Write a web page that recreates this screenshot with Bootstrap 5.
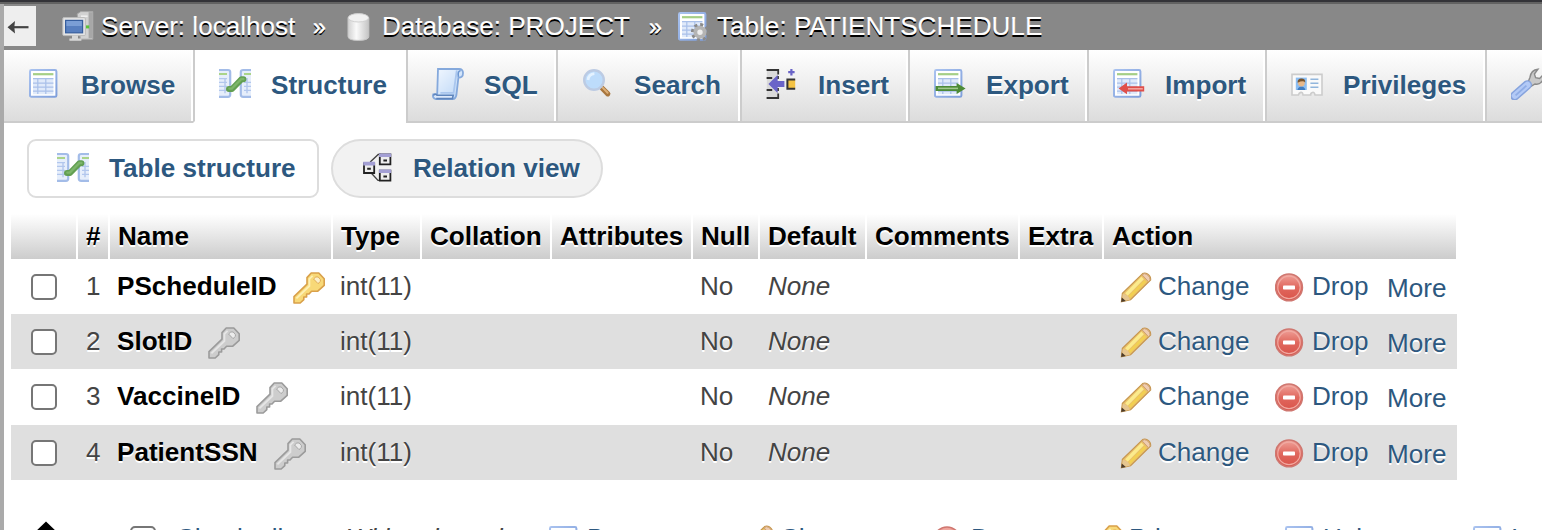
<!DOCTYPE html>
<html lang="en">
<head>
<meta charset="utf-8">
<title>PATIENTSCHEDULE structure</title>
<link href="https://cdn.jsdelivr.net/npm/bootstrap@5.3.0/dist/css/bootstrap.min.css" rel="stylesheet">
<style>
body{font:26.1px/30px "Liberation Sans",Arial,sans-serif;color:#444;background:#fff;height:530px;overflow:hidden;text-shadow:0 2px 0 #fff}
a{color:#2d587f;text-decoration:none}
.ico{width:32px;height:32px;flex:none;display:block}
.gold{--kf:#f8d978;--ks:#d9a04a;--kh:#fdf0b4}
.silver{--kf:#cdcdcd;--ks:#9b9b9b;--kh:#e6e6e6}
.shell{border-left:4px solid #aaa;height:526px;overflow:hidden}
.topline{height:4px;background:#333338;border-bottom:2px solid #626262}
.crumbs{height:46px;background:#888;text-shadow:0 2px 0 #000;white-space:nowrap}
.crumbs a{color:#fff}
.crumbs a.lbl{padding-bottom:2px;-webkit-text-stroke:.2px #fff}
.goback{width:32px;height:40px;background:#eee;margin-bottom:2px}
.sep{color:#fff;font-size:23px;width:13px;-webkit-text-stroke:.5px #fff}
.tabs{height:73px;width:1700px}
.tabs a{height:73px;padding:0 18px 3px 24px;border-left:2px solid #ccc;border-bottom:2px solid #ccc;background:linear-gradient(#fff,#dcdcdc);box-shadow:inset -2px 0 0 #fff;font-weight:bold;gap:20px;flex:none;white-space:nowrap}
.tabs span{padding-top:2px}
.tabs a.on{background:#fff;border-color:#ccc;border-bottom-color:#fff;box-shadow:none}
.sub{height:59px;border:2px solid #ddd;font-weight:bold;gap:20px;padding:0 0 1px 28px;white-space:nowrap}
.cols{table-layout:fixed;width:1446px;margin:16px 0 0 7px;border-collapse:separate;border-spacing:0}
.cols th{height:45px;padding:0 0 2px 8px;color:#000;background:linear-gradient(#fff,#ccc);border-right:2px solid #fff;white-space:nowrap;vertical-align:middle}
.cols th:last-child{border-right-width:1px}
.cols td{height:55px;padding:0 0 2px 8px;white-space:nowrap;vertical-align:middle}
.cols td.near{padding-left:7px}
.cols tr.tall td{height:56px}
.cols tr.even td{background:#dfdfdf}
.cols b{color:#000}
.cb{width:26px;height:26px;border:2px solid #767676;border-radius:5px;background:#fff;flex:none;display:block;margin:2px 0 0 12px}
.foot{margin:45px 0 0;height:32px;width:1800px}
.foot .lift{margin-top:-2px}
</style>
</head>
<body>
<svg width="0" height="0" class="position-absolute" aria-hidden="true">
<defs>
<linearGradient id="gr" x1="0" y1="0" x2="0" y2="1"><stop offset="0" stop-color="#f0a39b"/><stop offset=".5" stop-color="#e0685e"/><stop offset="1" stop-color="#d95249"/></linearGradient>
<linearGradient id="gd"><stop offset="0" stop-color="#d0d0d0"/><stop offset=".4" stop-color="#fafafa"/><stop offset="1" stop-color="#c4c4c4"/></linearGradient>
<linearGradient id="gb" x1="0" y1="0" x2="1" y2="1"><stop offset="0" stop-color="#a9c2ef"/><stop offset="1" stop-color="#7f9fdb"/></linearGradient>
<linearGradient id="gs" x1="0" y1="0" x2="1" y2="1"><stop offset="0" stop-color="#f4f9ff"/><stop offset="1" stop-color="#b8d4f6"/></linearGradient>
</defs>
<symbol id="tbl" viewBox="0 0 16 16"><rect x=".5" y="1" width="13.2" height="13.4" rx=".7" fill="#fff" stroke="url(#gb)"/><path d="M2 3.1h10.2" stroke="#a5cf86" stroke-width="1.1"/><path d="M2 5.1h10.2v8H2z" fill="#e0eafa"/><path d="M2 5.3h10.2M2 7.6h10.2M2 9.6h10.2M2 11.6h10.2M4.4 5v8M8.4 5v8" stroke="#a9c0e9" stroke-width=".6"/></symbol>
<symbol id="struct" viewBox="0 0 16 16"><path d="M0 1.2h4.5q1.1 0 1.1 1v11.2q0 1-1.1 1H0zM16 1.2h-3.9q-1.2 0-1.2 1v11.2q0 1 1.2 1H16z" fill="#e6eefb"/><path d="M0 1h4.5q1.1 0 1.1 1v11.4q0 1-1.1 1H0M16 1h-3.9q-1.2 0-1.2 1v11.4q0 1 1.2 1H16" fill="none" stroke="#a3bce8" stroke-width="1.1"/><path d="M0 3h4M12.5 3H16" stroke="#aad48a"/><path d="M0 5.3h4M0 7.2h4M0 9.2h4M0 11.2h4M3 5v7.6M12.5 7.2H16M12.5 9.2H16M12.5 11.2H16M14 5v7.6" stroke="#b2c7ed" stroke-width=".7"/><path d="M5 10.5h1.5L11.3 5.6h.9" fill="none" stroke="#629f52" stroke-width="3" stroke-linecap="round" stroke-linejoin="round"/><path d="M5.2 10.3h1.2l4.8-4.8h1" fill="none" stroke="#7db56a" stroke-width="1.2" stroke-linecap="round"/></symbol>
<symbol id="sql" viewBox="0 0 16 16"><path d="M3 .5h10.5q2.1 0 2 2.1 0 2.3-2.3 2.2L12.2 13.5q-.4 2-1.8 2H1.7Q.1 15 .6 13.2l2 -.2z" fill="url(#gs)" stroke="#85a9dc" stroke-width=".9"/><path d="M12.4 1.2 10.8 12.4H4.2" fill="none" stroke="#a9c6ee" stroke-width=".9"/><path d="M.7 13.8q.7-1.2 1.8-.2h8.1l-.4 1.7H2.1" fill="#dce9fb" stroke="#5e85bd" stroke-width=".8"/><path d="M13.2 4.4q-.5-3 1.1-3" fill="none" stroke="#6b96d2" stroke-width=".8"/></symbol>
<symbol id="search" viewBox="0 0 16 16"><path d="m10 10 2.9 2.9" stroke="#a8763e" stroke-width="2.6" stroke-linecap="round"/><path d="m10.3 9.8 2.5 2.6" stroke="#dcae76" stroke-width="1" stroke-linecap="round"/><circle cx="6" cy="6" r="4.9" fill="#bddcfb" stroke="#bccbe3" stroke-width="1.2"/><path d="M3 6q.3-3 3.2-3.2" fill="none" stroke="#e4f2ff" stroke-width="1.4"/></symbol>
<symbol id="insert" viewBox="0 0 16 16"><path d="M.4 1h5.5v14H.4z" fill="#dadada"/><path d="M.3 1h5.8v2.2M.3 5h2.8M6 4v1.5M.3 11h2.8M.3 15h5.8v-2.2M6 10v1.5" fill="none" stroke="#333" stroke-width=".9"/><path d="M1.2 8 5.8 3.5v3h3.4v3H5.8v3z" fill="#6a64c8"/><path d="M12.7.5v3.2M11.1 2.1h3.2" stroke="#6a64c8" stroke-width="1.1"/><path d="M14.6 5.8h-3.9v4.6h3.9" fill="#f4c345" stroke="#333"/></symbol>
<symbol id="export" viewBox="0 0 16 16"><use href="#tbl"/><path d="M.8 9h10.5V7.5L15.8 10.3l-4.5 2.7v-1.5H.8z" fill="#4d8b37"/><path d="M2 10.2h10" stroke="#a0c88c" stroke-width=".8"/></symbol>
<symbol id="import" viewBox="0 0 16 16"><use href="#tbl"/><path d="M15.6 9.1H7V7.3L2.8 10.3 7 13.1v-1.4h8.6z" fill="#df4f4a"/><path d="M7.5 10.4h7.4" stroke="#f3a29c" stroke-width=".8"/></symbol>
<symbol id="priv" viewBox="0 0 16 16"><path d="M.5 3.2h15v10.3H12q-.3-1.6-1.3-1.3t-.9 1.3H6q-.2-1.5-1.1-1.3T3.7 13.5H.5z" fill="#fafafa" stroke="#ccc" stroke-width=".8"/><rect x="2.4" y="4.8" width="5.5" height="6.2" fill="#8bbdf2"/><path d="M3.2 11q.4-1.8 2-1.8T7.2 11z" fill="#3f7cc0"/><circle cx="5.2" cy="7.5" r="1.7" fill="#e7b88a"/><path d="M3.3 7.4q-.2-2 1.9-2.1 2.1.1 1.9 2-1-1.3-3.8.1z" fill="#79542c"/><path d="M9.7 5.6h4M9.7 7.6h4M9.7 9.6h4" stroke="#92b6dc" stroke-width=".7"/></symbol>
<symbol id="wrench" viewBox="0 0 16 16"><path d="m8.3 7.6 1.2-3Q10 1 13.5.6L11.7 3l.6 1.8 2 .4L16 3.5V6q-1.5 2.6-4 2L10 9.2z" fill="#c9c9c9" stroke="#8a8a8a" stroke-width=".7"/><path d="M1.8 14 8.2 8.4" stroke="#86a3dd" stroke-width="4.6" stroke-linecap="round"/><path d="M2 13.8 8.2 8.4" stroke="#b2c9f6" stroke-width="3.2" stroke-linecap="round"/><path d="m2.3 13.7 5.4-4.9" stroke="#8fadE6" stroke-width=".9"/></symbol>
<symbol id="server" viewBox="0 0 16 16"><path d="M7.6 1.5 9.4.3h6v13.8H9.2z" fill="#d2d2d2" stroke="#a7a7a7" stroke-width=".5"/><path d="M13.3.6h2v13h-2z" fill="#a7a7a7"/><path d="M9.5 2.6h3.3" stroke="#eee" stroke-width=".8"/><rect x="12" y="7.2" width="1.6" height="1.5" fill="#5cc33c"/><rect x=".4" y="3.3" width="11.3" height="9" rx=".6" fill="#e4e4e4" stroke="#bbb" stroke-width=".5"/><rect x="1.8" y="4.7" width="8.5" height="6.2" fill="#587fbf" stroke="#365e9e" stroke-width=".6"/><path d="M2.2 5h7.7v2.5H2.2z" fill="#7b9ed5"/><path d="M5 12.3h3v1.5h1.7v1.1H3.7v-1.1H5z" fill="#d7d7d7"/></symbol>
<symbol id="db" viewBox="0 0 16 16"><path d="M3 3.4v9.3q0 2 5.2 2t5.2-2V3.4z" fill="url(#gd)" stroke="#c6c6c6" stroke-width=".5"/><ellipse cx="8.2" cy="3.4" rx="5.1" ry="2.1" fill="#f1f1f1" stroke="#d0d0d0" stroke-width=".5"/></symbol>
<symbol id="tblgear" viewBox="0 0 16 16"><use href="#tbl"/><circle cx="11" cy="10.6" r="3.7" fill="none" stroke="#8a8a8a" stroke-width="1.7" stroke-dasharray="1.5 1.4"/><circle cx="11" cy="10.6" r="2.3" fill="#eee" stroke="#b4b4b4" stroke-width="1.9"/></symbol>
<symbol id="rel" viewBox="0 0 16 16"><path d="m4.6 5 4-3.8H10M5 10.4l3.5 3.8H10" fill="none" stroke="#444" stroke-width=".7"/><path d="M1.5 5.7h5.1v4.8H1.5zM9.4 1.2h5.3v5H9.4zM9.4 9.3h5.3v5H9.4z" fill="#eee" stroke="#222" stroke-width=".9"/><path d="M1.1 4.9h5.9v1.9H1.1zM9 .7h6.1v1.8H9zM9 8.7h6.1v1.8H9z" fill="#a39fd4"/><path d="M3.1 8.4h1.8M11.2 4.2H13M11.2 12.3H13" stroke="#222"/></symbol>
<symbol id="key" viewBox="0 0 16 16"><path d="M9.1.5h3.8L15.6 3.4v3.3L12.4 9.6H9.3L8 11H6.8v1.5H5.4v1.3L3.6 15.5H.5v-3.2L7 6.1V2.8z" fill="var(--kf)" stroke="var(--ks)" stroke-width=".8" stroke-linejoin="round"/><path d="M1.7 13.2 8.2 7V3.4L9.8 1.9" fill="none" stroke="var(--kh)" stroke-width=".9"/><path d="m10.3 3.5 1.1-1h1.2l1.1 1.3v.9l-1.2 1.1z" fill="#fff" fill-opacity=".6" stroke="var(--ks)" stroke-width=".4"/></symbol>
<symbol id="pencil" viewBox="0 0 16 16"><path d="m.7 14.9.5-4.3L11.3.8q1.1-.7 2.5.2 1.7 1.2 1.5 3L5.3 13.9z" fill="#eac06a" stroke="#c6964f" stroke-width=".6"/><path d="M3.2 11.2 11.3 3" stroke="#fbeb8d" stroke-width="1.8"/><path d="m4.7 12.5 8-8" stroke="#f2d051" stroke-width="1.3"/><path d="m11.1 1.5 1-.7q2.7.5 3 3.2l-.9.8z" fill="#efccb1" stroke="#cda174" stroke-width=".5"/><path d="m.9 14.7.5-3.8q2.8.5 3.5 3z" fill="#e6c690"/><path d="m.6 15 .3-2.3 2 1.8z" fill="#4c3b2a"/></symbol>
<symbol id="drop" viewBox="0 0 16 16"><circle cx="7" cy="7.7" r="6.7" fill="url(#gr)" stroke="#cf7770" stroke-width=".8"/><circle cx="7" cy="7.7" r="5.6" fill="none" stroke="#f0aaa2" stroke-width=".6"/><rect x="4" y="6.7" width="6" height="2.1" rx=".4" fill="#fff"/></symbol>
</svg>

<div class="topline"></div>
<div class="shell">
  <nav class="crumbs d-flex align-items-center">
    <a href="#" class="goback d-flex align-items-center"><svg width="32" height="40" viewBox="0 0 32 40"><path d="M9 21.2h15.5" stroke="#444" stroke-width="2.2"/><path d="M3.5 21.2 11 15q-1.4 6.2 0 12.4z" fill="#444"/></svg></a>
    <svg class="ico" style="margin-left:26px"><use href="#server"/></svg><a href="#" class="lbl" style="margin-left:7px;width:196px">Server: localhost</a>
    <span class="sep" style="margin-left:16px">»</span>
    <svg class="ico" style="margin-left:16px"><use href="#db"/></svg><a href="#" class="lbl" style="margin-left:8px;width:251px">Database: PROJECT</a>
    <span class="sep" style="margin-left:16px">»</span>
    <svg class="ico" style="margin-left:16px"><use href="#tblgear"/></svg><a href="#" class="lbl" style="margin-left:7px">Table: PATIENTSCHEDULE</a>
  </nav>
  <nav class="tabs d-flex">
    <a href="#" class="d-flex align-items-center border-start-0" style="width:189px;padding-left:25px"><svg class="ico"><use href="#tbl"/></svg><span>Browse</span></a>
    <a href="#" class="on d-flex align-items-center" style="width:213px"><svg class="ico"><use href="#struct"/></svg><span>Structure</span></a>
    <a href="#" class="d-flex align-items-center" style="width:150px"><svg class="ico"><use href="#sql"/></svg><span>SQL</span></a>
    <a href="#" class="d-flex align-items-center" style="width:184px"><svg class="ico"><use href="#search"/></svg><span>Search</span></a>
    <a href="#" class="d-flex align-items-center" style="width:168px"><svg class="ico"><use href="#insert"/></svg><span>Insert</span></a>
    <a href="#" class="d-flex align-items-center" style="width:179px"><svg class="ico"><use href="#export"/></svg><span>Export</span></a>
    <a href="#" class="d-flex align-items-center" style="width:178px"><svg class="ico"><use href="#import"/></svg><span>Import</span></a>
    <a href="#" class="d-flex align-items-center" style="width:220px"><svg class="ico"><use href="#priv"/></svg><span>Privileges</span></a>
    <a href="#" class="d-flex align-items-center" style="width:200px"><svg class="ico"><use href="#wrench"/></svg></a>
  </nav>
  <div class="d-flex" style="margin:16px 0 0 23px;gap:12px">
    <a href="#" class="sub d-flex align-items-center" style="width:292px;border-radius:9px"><svg class="ico"><use href="#struct"/></svg>Table structure</a>
    <a href="#" class="sub d-flex align-items-center" style="width:272px;border-radius:30px;background:#f2f2f2"><svg class="ico"><use href="#rel"/></svg>Relation view</a>
  </div>
  <table class="cols">
    <colgroup><col style="width:67px"><col style="width:32px"><col style="width:223px"><col style="width:89px"><col style="width:130px"><col style="width:141px"><col style="width:67px"><col style="width:107px"><col style="width:153px"><col style="width:84px"><col style="width:353px"></colgroup>
    <thead><tr><th></th><th>#</th><th>Name</th><th>Type</th><th>Collation</th><th>Attributes</th><th>Null</th><th>Default</th><th>Comments</th><th>Extra</th><th>Action</th></tr></thead>
    <tbody id="rows"></tbody>
  </table>
  <div class="foot d-flex align-items-start">
    <svg width="40" height="34" viewBox="0 0 40 34" style="margin:-4px 0 0 22px"><path d="M20 .5 33 13h-8v20H15V13H7z" fill="#000"/></svg>
    <span class="cb" style="margin:1px 0 0 64px"></span>
    <a href="#" class="lift" style="margin-left:20px;width:170px">Check all</a>
    <i class="lift" style="width:203px">With selected:</i>
    <a href="#" class="d-flex" style="gap:6px;width:193px"><svg class="ico"><use href="#tbl"/></svg><span class="lift">Browse</span></a>
    <a href="#" class="d-flex" style="gap:6px;width:191px"><svg class="ico"><use href="#pencil"/></svg><span class="lift">Change</span></a>
    <a href="#" class="d-flex" style="gap:6px;width:158px"><svg class="ico"><use href="#drop"/></svg><span class="lift">Drop</span></a>
    <a href="#" class="d-flex" style="gap:6px;width:194px"><svg class="ico gold"><use href="#key"/></svg><span class="lift">Primary</span></a>
    <a href="#" class="d-flex" style="gap:6px;width:188px"><svg class="ico"><use href="#tbl"/></svg><span class="lift">Unique</span></a>
    <a href="#" class="d-flex" style="gap:6px"><svg class="ico"><use href="#tbl"/></svg><span class="lift">Index</span></a>
  </div>
</div>
<script>
document.getElementById('rows').innerHTML = ['PScheduleID','SlotID','VaccineID','PatientSSN'].map((n, i) => `
<tr class="${i % 2 ? 'even' : ''} ${i === 2 ? 'tall' : ''}">
<td><span class="cb"></span></td><td>${i + 1}</td>
<td class="near"><div class="d-flex align-items-center"><b>${n}</b><svg class="ico ${i ? 'silver' : 'gold'}" style="margin:4px 0 0 16px"><use href="#key"/></svg></div></td>
<td class="near">int(11)</td><td></td><td></td><td class="near">No</td><td><i>None</i></td><td></td><td></td>
<td><div class="d-flex align-items-center">
<svg class="ico" style="margin:4px 0 0 8px"><use href="#pencil"/></svg><a href="#" style="margin-left:6px;width:116px">Change</a>
<svg class="ico" style="margin:4px 0 0 1px"><use href="#drop"/></svg><a href="#" style="margin-left:5px;width:75px">Drop</a>
<a href="#" style="margin-top:4px">More</a></div></td></tr>`).join('');
</script>
<script src="https://cdn.jsdelivr.net/npm/bootstrap@5.3.0/dist/js/bootstrap.bundle.min.js"></script>
</body>
</html>
